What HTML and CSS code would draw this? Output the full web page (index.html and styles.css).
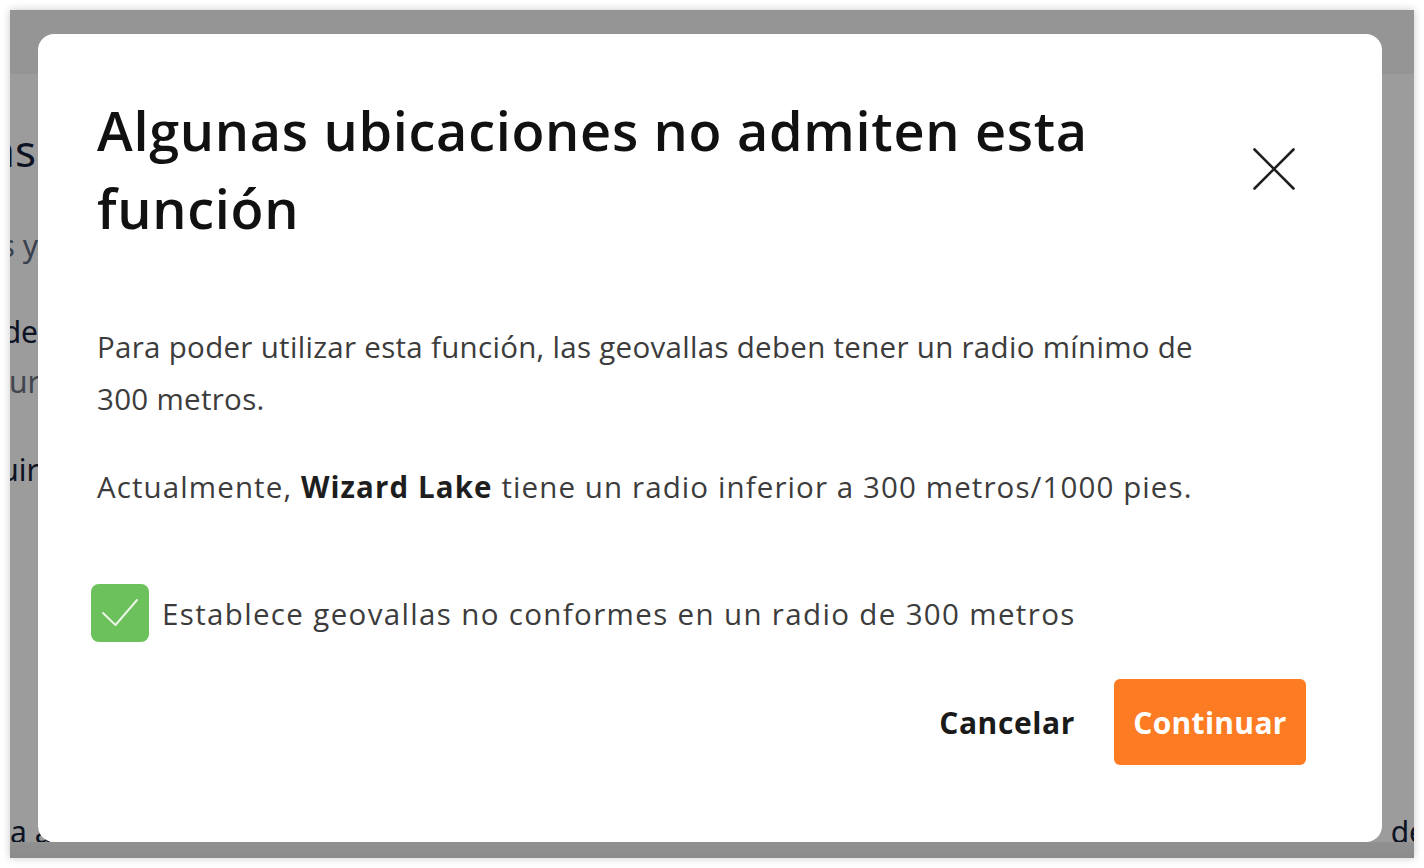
FILE: index.html
```html
<!DOCTYPE html>
<html lang="es">
<head>
<meta charset="utf-8">
<title>Geovallas</title>
<link rel="stylesheet" href="styles.css">
</head>
<body>
<div class="frame">
  <div class="bgpage">
    <div class="bg-header"></div>
    <div class="bg-lines">
      <div class="bg-line l1"><span>Geovallas</span></div>
      <div class="bg-line l2"><span>Configura zonas y</span></div>
      <div class="bg-line l3"><span>Radio de</span></div>
      <div class="bg-line l4"><span>Cada ur</span></div>
      <div class="bg-line l5"><span>Adquir</span></div>
      <div class="bg-bottom"><span>a à</span><span>de</span></div>
    </div>
    <div class="bg-footer"></div>
  </div>
  <div class="overlay"></div>
  <div class="modal" role="dialog">
    <div class="modal-head">
      <h1 class="modal-title">Algunas ubicaciones no admiten esta función</h1>
      <button class="close" aria-label="Cerrar">
        <svg viewBox="0 0 42 42" width="42" height="42"><path d="M1.5 1.5 L40.5 40.5 M40.5 1.5 L1.5 40.5" stroke="#1f1f1f" stroke-width="2.6" fill="none" stroke-linecap="round"/></svg>
      </button>
    </div>
    <p class="text p1">Para poder utilizar esta función, las geovallas deben tener un radio mínimo de 300 metros.</p>
    <p class="text p2">Actualmente, <b>Wizard Lake</b> tiene un radio inferior a 300 metros/1000 pies.</p>
    <label class="check-row">
      <span class="checkbox"><svg viewBox="0 0 58 58" width="58" height="58"><path d="M12 29 L24.5 41 L46 16" stroke="#e9f6e5" stroke-width="2" fill="none" stroke-linecap="round" stroke-linejoin="round"/></svg></span>
      <span class="check-label">Establece geovallas no conformes en un radio de 300 metros</span>
    </label>
    <div class="modal-foot">
      <button class="btn btn-cancel">Cancelar</button>
      <button class="btn btn-primary">Continuar</button>
    </div>
  </div>
</div>
</body>
</html>
```
FILE: styles.css
```css
* { box-sizing: border-box; }
html, body { margin: 0; padding: 0; background: #ffffff; }
body { padding: 10px; font-family: "Open Sans", "Noto Sans", sans-serif; }

.frame {
  position: relative;
  width: 1404px;
  height: 848px;
  overflow: hidden;
  background: #ffffff;
  box-shadow: 0 0 8px rgba(0,0,0,0.22);
}

.bgpage {
  height: 100%;
  display: flex;
  flex-direction: column;
}
.bg-header { height: 64px; background: #f4f4f4; flex: none; }
.bg-lines {
  flex: 1;
  display: flex;
  flex-direction: column;
  font-family: "Noto Sans", sans-serif;
}
.bg-line {
  width: 28px;
  display: flex;
  justify-content: flex-end;
  white-space: nowrap;
  height: 40px;
  line-height: 40px;
  color: #15223a;
  font-size: 30px;
}
.l1 { margin-top: 51px; font-size: 44px; height: 50px; line-height: 50px; width: 26px; }
.l2 { margin-top: 51px; color: #5d6b80; font-size: 30px; }
.l3 { margin-top: 46px; }
.l4 { margin-top: 10px; color: #6b7280; width: 30px; }
.l5 { margin-top: 48px; width: 29px; }
.bg-bottom {
  margin-top: auto;
  margin-bottom: -10px;
  height: 40px;
  line-height: 40px;
  font-size: 30px;
  color: #15223a;
  display: flex;
  justify-content: space-between;
  margin-right: -12px;
  white-space: nowrap;
}
.bg-footer { height: 16px; background: linear-gradient(#ececec, #e4e4e4); flex: none; }

.overlay {
  position: absolute;
  inset: 0;
  background: rgba(0,0,0,0.39);
}

.modal {
  position: absolute;
  left: 28px;
  top: 24px;
  width: 1344px;
  height: 808px;
  background: #ffffff;
  border-radius: 16px;
  padding: 57px 58px 0 59px;
  display: flex;
  flex-direction: column;
}

.modal-head {
  display: flex;
  align-items: center;
  justify-content: space-between;
}
.modal-title {
  margin: 0;
  flex: 1;
  font-size: 54px;
  line-height: 78px;
  font-weight: 600;
  color: #111111;
  font-family: "Open Sans", sans-serif;
  letter-spacing: 0.7px;
}
.close {
  width: 100px;
  height: 100px;
  flex: none;
  border: 0;
  background: transparent;
  padding: 0;
  display: flex;
  align-items: center;
  justify-content: center;
  cursor: pointer;
}

.text {
  margin: 0;
  max-width: 1125px;
  font-size: 29.5px;
  line-height: 52px;
  color: #3c3c3c;
}
.text b { color: #1e1e1e; font-weight: 700; }
.p1 { margin-top: 74px; letter-spacing: 0.3px; }
.p2 { margin-top: 36px; letter-spacing: 1.1px; }

.check-row {
  margin-top: 71px;
  display: flex;
  align-items: center;
  margin-left: -6px;
}
.checkbox {
  width: 58px;
  height: 58px;
  border-radius: 8px;
  background: #6cc15c;
  display: flex;
  flex: none;
}
.check-label {
  margin-left: 13px;
  font-size: 29.5px;
  color: #3c3c3c;
  letter-spacing: 1.35px;
}

.modal-foot {
  margin-top: 37px;
  display: flex;
  justify-content: flex-end;
  align-items: center;
  padding-right: 18px;
}
.btn {
  font-family: "Open Sans", sans-serif;
  font-size: 30px;
  font-weight: 700;
  border: 0;
  cursor: pointer;
}
.btn-cancel {
  background: transparent;
  color: #1a1a1a;
  padding: 0;
  margin-right: 39px;
  letter-spacing: 0.6px;
}
.btn-primary {
  background: #fd7c23;
  color: #ffffff;
  height: 86px;
  width: 192px;
  border-radius: 6px;
  padding: 0;
  letter-spacing: 0.3px;
}
```
